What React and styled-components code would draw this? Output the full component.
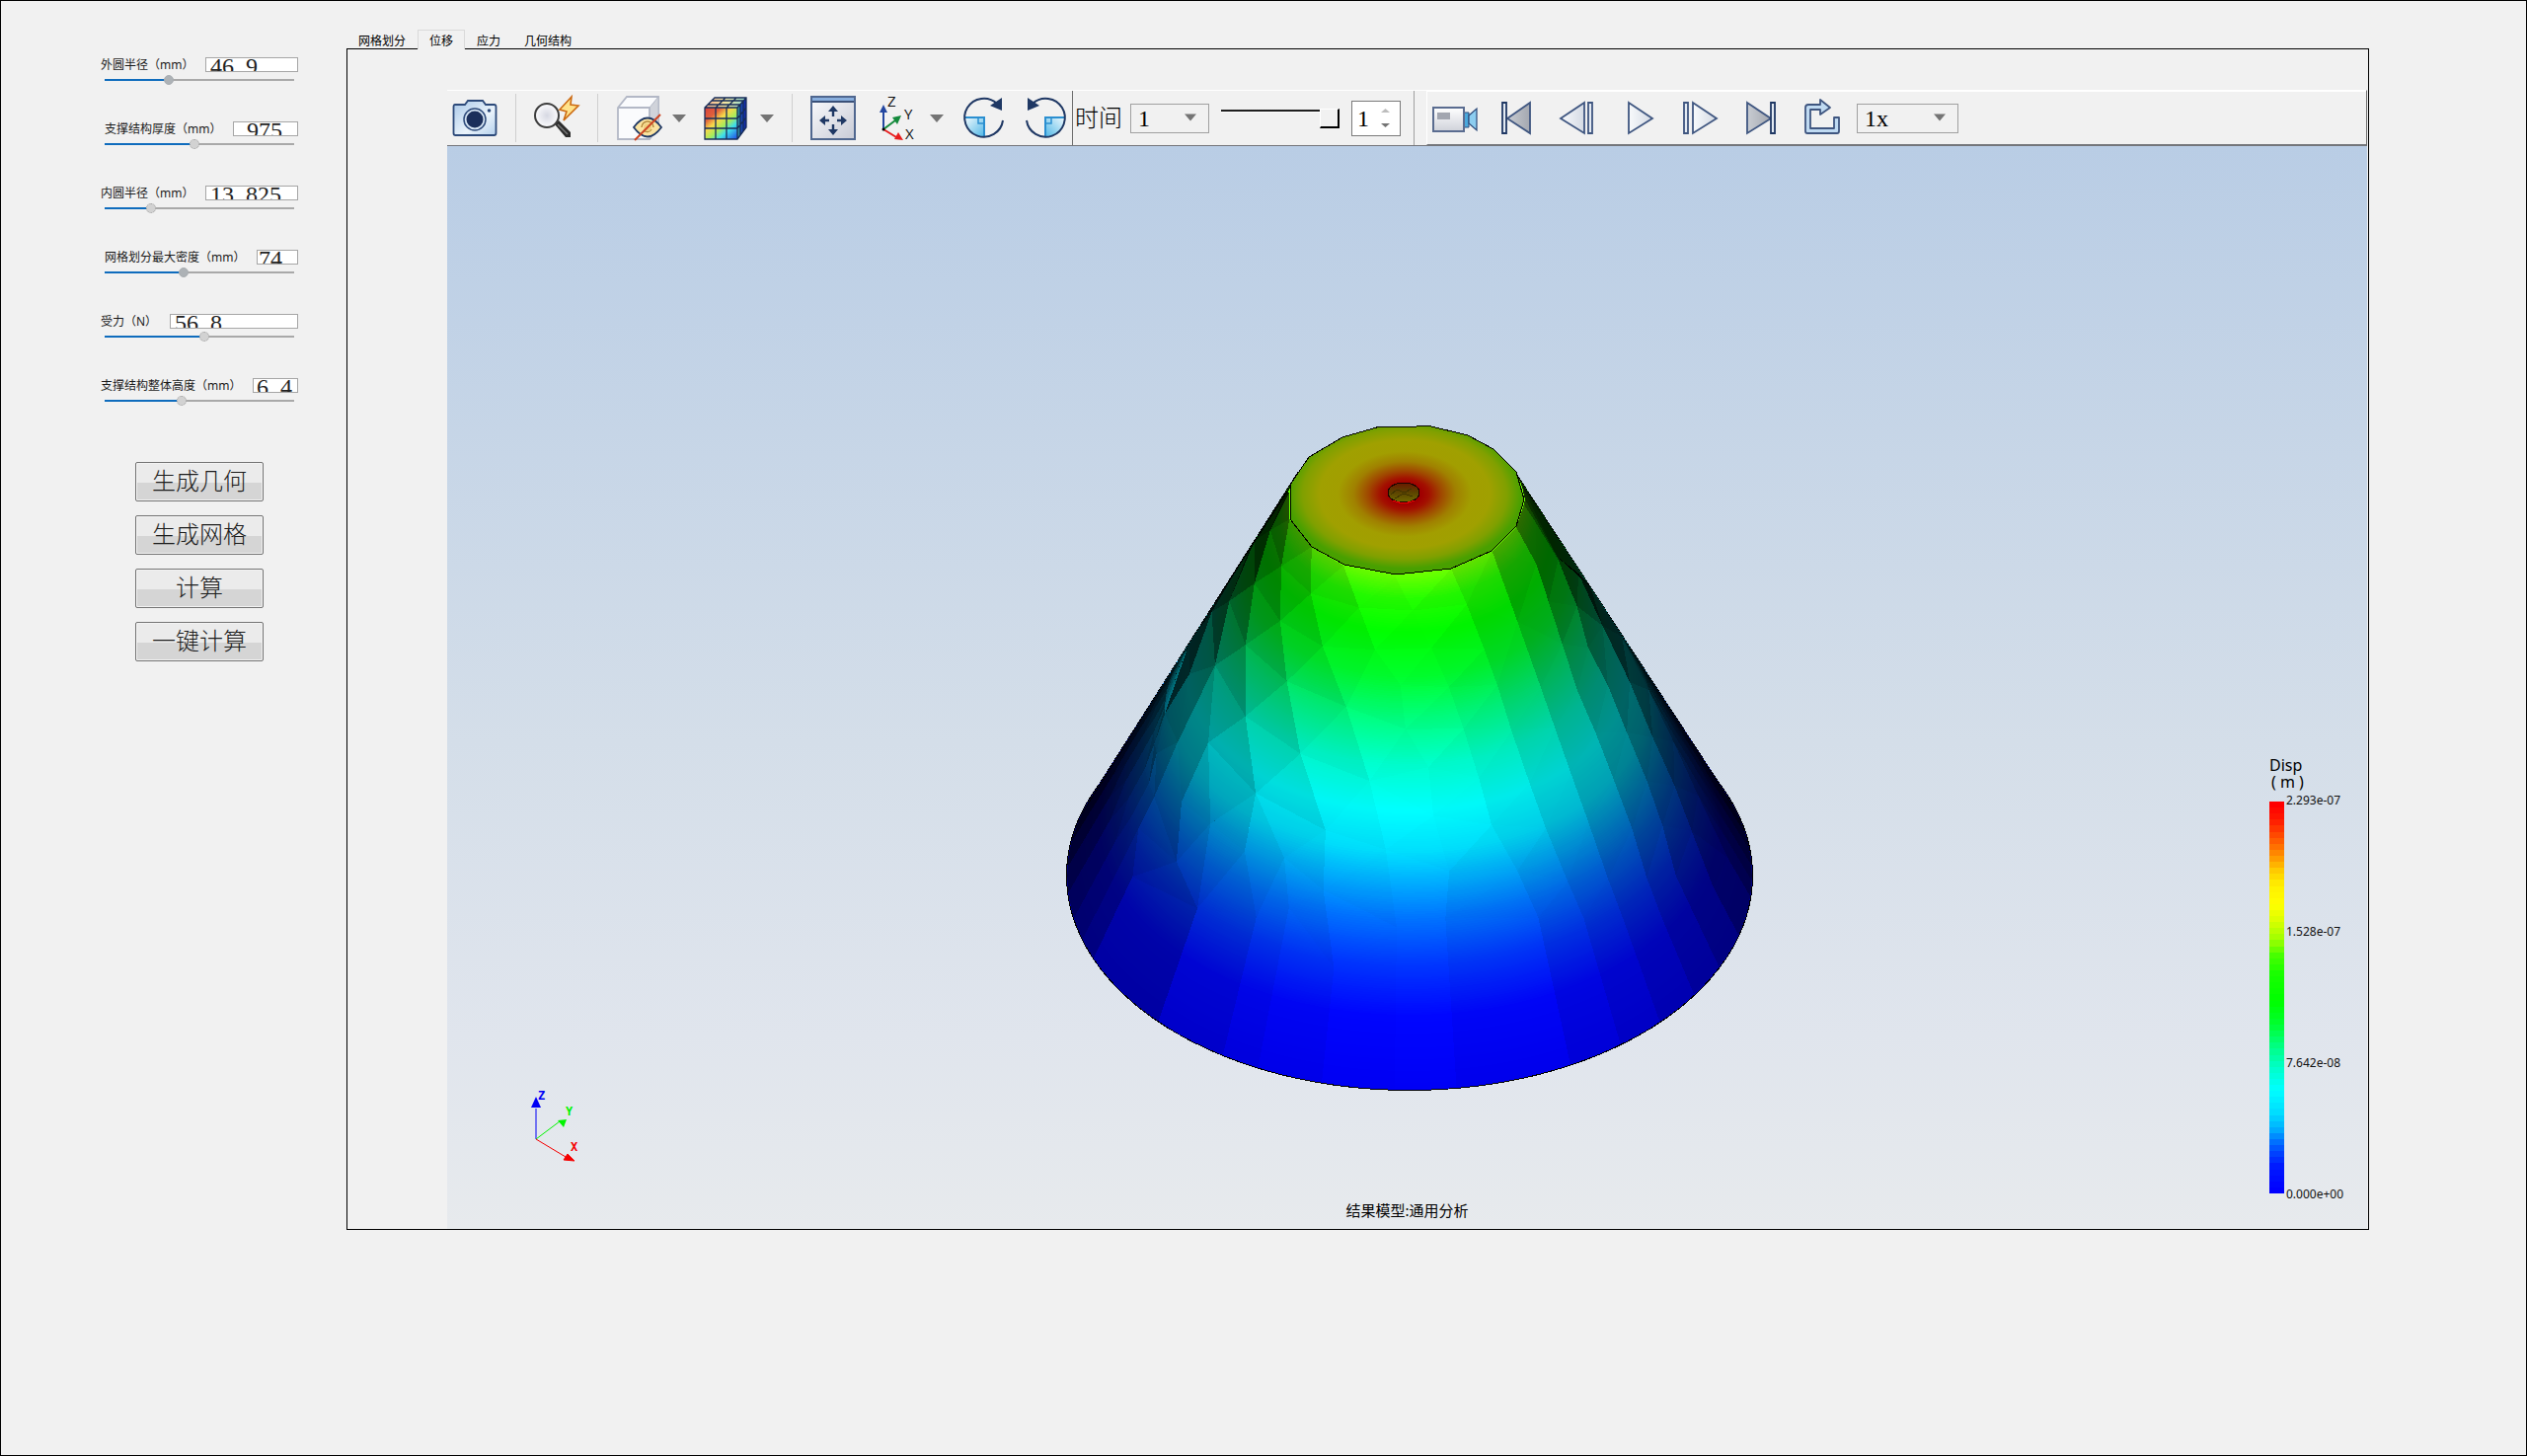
import React, { useState } from 'react';
import styled, { createGlobalStyle } from 'styled-components';

const GlobalStyle = createGlobalStyle`
  *, *::before, *::after {
    box-sizing: border-box;
  }
  body {
    margin: 0;
    background: #f1f1f1;
    color: #000;
    font-family: 'Noto Sans', 'Noto Sans CJK SC', sans-serif;
    font-size: 12px;
  }
  button, input, select {
    margin: 0;
    padding: 0;
    font: inherit;
    color: inherit;
  }
`;

const serif = `'Liberation Serif', 'Noto Sans CJK SC', serif`;

const Page = styled.div`
  display: flex;
  min-height: 100vh;
  border: 1px solid #000;
  background: #f1f1f1;
`;

/* ---------- parameters ---------- */

const Sidebar = styled.aside`
  flex: none;
  width: 350px;
  padding: 57px 49px 0 101px;
`;

const Params = styled.div`
  display: flex;
  flex-direction: column;
  gap: 36px;
`;

const ParamRow = styled.div`
  display: flex;
  justify-content: space-between;
  align-items: center;
  height: 15px;
  padding-left: ${(p) => (p.$indent ? 4 : 0)}px;
`;

const ParamLabel = styled.label`
  line-height: 15px;
  white-space: nowrap;
  color: #1a1a1a;
`;

const ParamInput = styled.input`
  width: ${(p) => p.$width}px;
  height: 15px;
  padding: 4px 0 0 ${(p) => p.$pad}px;
  border: 1px solid #a6a6a6;
  border-radius: 0;
  background: #fff;
  color: #222;
  font-family: ${serif};
  font-size: 24px;
  line-height: 24px;
  outline: none;
`;

const Track = styled.div`
  margin-top: 2px;
  padding: 0 4px;
`;

const Range = styled.input`
  display: block;
  appearance: none;
  width: 100%;
  height: 12px;
  background: linear-gradient(to right, #0f6cbd ${(p) => p.value}%, #a9a9a9 ${(p) => p.value}%) center / 100% 2px no-repeat;

  &::-webkit-slider-thumb {
    appearance: none;
    width: 10px;
    height: 10px;
    border-radius: 50%;
    border: 1px ${(p) => (p.$solid ? 'solid #a9aeb2' : 'dotted #a0a0a0')};
    background: ${(p) => (p.$solid ? '#adb2b6' : '#d2d2d2')};
  }
`;

const Actions = styled.div`
  display: flex;
  flex-direction: column;
  align-items: center;
  gap: 14px;
  margin-top: 56px;
`;

const ActionButton = styled.button`
  width: 130px;
  height: 40px;
  border: 1px solid #747474;
  border-radius: 2px;
  background: linear-gradient(#ebebeb 0, #ebebeb 53%, #d5d5d5 53%, #d5d5d5 100%);
  box-shadow: inset 0 0 0 1px #f3f3f3;
  color: #1c1c1c;
  font-family: ${serif};
  font-size: 24px;
  line-height: 36px;
  font-weight: 300;
`;

/* ---------- workspace ---------- */

const Workspace = styled.main`
  flex: 1;
  display: flex;
  flex-direction: column;
  min-width: 0;
  padding: 29px 159px 228px 0;
`;

const Tabs = styled.div`
  display: flex;
  height: 20px;
  margin-bottom: -1px;
`;

const Tab = styled.button`
  position: relative;
  height: 20px;
  padding: 2px 11px 0;
  border: 1px solid ${(p) => (p.$active ? '#d9d9d9' : 'transparent')};
  border-bottom: 0;
  background: ${(p) => (p.$active ? '#f1f1f1' : 'transparent')};
  font-size: 12px;
  line-height: 17px;
`;

const Panel = styled.section`
  flex: 1;
  display: flex;
  flex-direction: column;
  border: 1px solid #000;
  padding: 41px 1px 0 101px;
`;

const Toolbar = styled.div`
  display: flex;
  height: 57px;
  border-top: 1px solid #fff;
  border-right: 1px solid #6e6e6e;
  border-bottom: 1px solid #74767a;
`;

const ToolGroup = styled.div`
  display: flex;
  align-items: center;
  gap: ${(p) => p.$gap}px;
  padding: 0 ${(p) => p.$end || 0}px 0 ${(p) => p.$start || 0}px;
`;

const TimeGroup = styled(ToolGroup)`
  border-left: 1px solid #6e6e6e;
  border-right: 1px solid #a0a0a0;
`;

const ToolButton = styled.button`
  display: flex;
  align-items: center;
  gap: 11px;
  border: 0;
  background: none;
`;

const Separator = styled.span`
  width: 1px;
  height: 49px;
  background: #cfcfcf;
`;

const TimeLabel = styled.label`
  font-family: ${serif};
  font-size: 24px;
  line-height: 30px;
  font-weight: 300;
`;

const SelectBox = styled.span`
  display: flex;
  align-items: center;
  position: relative;
  width: ${(p) => p.$width}px;
  height: 30px;
  border: 1px solid #a0a0a0;

  svg {
    position: absolute;
    right: 12px;
    top: 9px;
    pointer-events: none;
  }
`;

const Select = styled.select`
  appearance: none;
  width: 100%;
  height: 28px;
  padding: 1px 0 0 7px;
  border: 0;
  background: none;
  font-family: ${serif};
  font-size: 24px;
  line-height: 26px;
`;

const TimeRange = styled.input`
  appearance: none;
  width: 120px;
  height: 20px;
  margin: 0 4px;
  background: linear-gradient(#3a3a3a 0, #000 2px, #fff 2px, #fff 3px, transparent 3px) 0 1px no-repeat;

  &::-webkit-slider-thumb {
    appearance: none;
    width: 20px;
    height: 20px;
    border: 1px solid #fff;
    border-right: 2px solid #000;
    border-bottom: 2px solid #000;
    background: #f1f1f1;
  }
`;

const SpinBox = styled.span`
  display: flex;
  align-items: center;
  width: 50px;
  height: 36px;
  padding-right: 10px;
  border: 1px solid #7a7a7a;
  background: #fff;
`;

const SpinInput = styled.input`
  flex: 1;
  min-width: 0;
  height: 34px;
  padding: 2px 0 0 5px;
  border: 0;
  background: none;
  font-family: ${serif};
  font-size: 24px;
  outline: none;
`;

const PlayerBar = styled(ToolGroup)`
  flex: 1;
  margin-left: 12px;
  border-left: 1px solid #fff;
  border-top: 1px solid #fff;
  border-bottom: 1px solid #74767a;
`;

const Viewport = styled.div`
  flex: 1;
  position: relative;
  min-height: 900px;
  overflow: hidden;
  background: linear-gradient(#b9cde5, #d4dee9 55%, #e0e5ed 82%, #e7eaed);
`;

const Model = styled.svg`
  position: absolute;
  left: calc(50% - 356px);
  top: 271px;
`;

const Triad = styled.svg`
  position: absolute;
  left: 78px;
  bottom: 66px;
  font: bold 12px 'DejaVu Sans Mono', monospace;
`;

const Caption = styled.div`
  position: absolute;
  left: 0;
  right: 0;
  bottom: 9px;
  text-align: center;
  font-size: 15px;
  line-height: 20px;
`;

const Legend = styled.div`
  position: absolute;
  right: 19px;
  bottom: 36px;
  width: 80px;
`;

const LegendTitle = styled.div`
  margin-bottom: 11px;
  font-size: 16px;
  line-height: 17px;

  span {
    display: block;
    padding-left: 2px;
  }
`;

const LegendBody = styled.div`
  display: flex;
  gap: 2px;
`;

const LegendLabels = styled.div`
  display: flex;
  flex-direction: column;
  justify-content: space-between;
  margin: -8px 0;
  line-height: 14px;
  white-space: nowrap;
  color: #111;
`;

/* ---------- colour ramps ---------- */

const mix = (stops, t) => {
  let i = 1;
  while (i < stops.length - 1 && t > stops[i][0]) i++;
  const [t0, a] = stops[i - 1];
  const [t1, b] = stops[i];
  const k = Math.min(1, Math.max(0, (t - t0) / (t1 - t0)));
  return `rgb(${a.map((v, n) => Math.round(v + (b[n] - v) * k)).join(',')})`;
};

const legendStops = [
  [0, [0, 0, 255]],
  [0.06, [0, 24, 255]],
  [0.1, [0, 72, 255]],
  [0.13, [0, 120, 255]],
  [0.16, [0, 176, 255]],
  [0.2, [0, 220, 255]],
  [0.26, [0, 255, 255]],
  [0.32, [0, 255, 200]],
  [0.38, [0, 255, 120]],
  [0.43, [0, 255, 48]],
  [0.49, [0, 255, 0]],
  [0.56, [24, 255, 0]],
  [0.61, [72, 255, 0]],
  [0.65, [160, 255, 0]],
  [0.7, [220, 255, 0]],
  [0.74, [255, 255, 0]],
  [0.79, [255, 240, 0]],
  [0.83, [255, 200, 0]],
  [0.87, [255, 140, 0]],
  [0.91, [255, 88, 0]],
  [0.96, [255, 24, 0]],
  [1, [255, 0, 0]],
];

const coneStops = [
  [0, [0, 0, 245]],
  [0.14, [0, 6, 255]],
  [0.24, [0, 54, 255]],
  [0.33, [0, 115, 255]],
  [0.39, [0, 165, 255]],
  [0.46, [0, 225, 255]],
  [0.54, [0, 255, 255]],
  [0.63, [0, 255, 205]],
  [0.72, [0, 255, 125]],
  [0.8, [0, 255, 45]],
  [0.885, [0, 255, 0]],
  [0.95, [36, 255, 0]],
  [1, [110, 255, 0]],
];

/* ---------- cone geometry ---------- */

const VIEW = [0, 0.777, 0.63];
const EDGE = 1.96;
const BASE = -0.03;

// s runs from 0 at the base to 1 at the top face
const ring = (s) => ({
  cx: 358 - 3 * s,
  cy: 468 - 380 * s,
  rx: 347 - 228 * s,
  ry: 217 - 142 * s,
});

const locate = ([x, y]) => {
  let best = { f: Infinity, s: 0 };
  for (let s = 1; s >= 0; s -= 0.005) {
    const r = ring(s);
    const f = ((x - r.cx) / r.rx) ** 2 + ((y - r.cy) / r.ry) ** 2;
    if (f < best.f) best = { f, s };
    if (f <= 1) break;
  }
  const r = ring(best.s);
  return { s: best.s, a: Math.atan2((x - r.cx) / r.rx, (y - r.cy) / r.ry) };
};

const node = ({ s, a }) => {
  const r = ring(s);
  return {
    flat: [r.cx + r.rx * Math.sin(a), r.cy + r.ry * Math.cos(a)],
    solid: [r.rx * Math.sin(a), r.rx * Math.cos(a), 490 * s],
  };
};

const chains = [
  [[135, 232], [111, 304], [102, 344], [100, 388], [85, 420], [78, 469]],
  [[190, 134], [158, 201], [135, 264], [123, 333], [128, 393], [124, 453], [145, 500]],
  [[232, 78], [201, 129], [176, 190], [161, 255], [155, 333], [157, 415], [193, 442], [203, 510]],
  [[236, 80], [217, 118], [201, 172], [193, 234], [193, 306], [203, 384], [232, 449], [236, 500]],
  [[237, 107], [230, 154], [227, 210], [234, 271], [248, 344], [273, 422], [271, 482], [282, 560]],
  [[259, 135], [260, 181], [271, 235], [295, 295], [318, 370], [334, 441], [345, 520]],
  [[292, 153], [307, 196], [323, 239], [349, 273], [354, 317], [377, 357], [382, 407], [398, 463], [394, 510]],
  [[344, 163], [361, 198], [380, 237], [397, 275], [412, 318], [427, 367], [440, 415], [467, 463], [488, 510]],
  [[400, 157], [415, 192], [432, 237], [445, 273], [460, 320], [478, 373], [496, 420], [517, 473], [533, 510]],
  [[441, 139], [466, 210], [490, 277], [503, 317], [520, 363], [538, 413], [557, 470], [572, 510]],
  [[466, 115], [485, 152], [497, 190], [512, 233], [527, 280], [545, 323], [563, 370], [582, 420], [597, 470], [612, 510]],
  [[472, 92], [485, 110], [508, 148], [527, 195], [538, 237], [558, 275], [578, 323], [597, 372], [613, 417], [627, 468], [647, 510]],
  [[474, 87], [507, 145], [529, 162], [553, 215], [581, 272], [603, 328], [625, 377], [643, 423], [665, 480]],
  [[541, 175], [573, 226], [600, 280], [625, 332], [650, 387], [680, 450]],
];

const finish = (chain) => {
  const placed = chain.map(locate);
  const last = placed[placed.length - 1];
  if (last.s > 0.2) placed.push({ s: last.s / 2, a: last.a });
  return [...placed, { s: BASE, a: last.a }];
};

const inner = chains.map(finish);

// narrow columns between the outermost chain and the silhouette
const fan = (chain, edge, steps) =>
  steps.map((k) => [{ s: 1, a: edge * 0.9 }, ...chain].map(({ s, a }) => ({ s, a: a + (edge - a) * k })));

const columns = [
  ...fan(inner[0], -EDGE, [1, 0.85, 0.7, 0.55, 0.4, 0.25, 0.12, 0]),
  ...inner.slice(1, -1),
  ...fan(inner[inner.length - 1], EDGE, [0, 0.15, 0.3, 0.45, 0.6, 0.8, 1]),
].map((column) => column.map(node));

const sub = (p, q) => p.map((v, i) => v - q[i]);
const length = (v) => Math.hypot(...v);

const brightness = (a, b, c) => {
  const u = sub(b.solid, a.solid);
  const v = sub(c.solid, a.solid);
  const n = [u[1] * v[2] - u[2] * v[1], u[2] * v[0] - u[0] * v[2], u[0] * v[1] - u[1] * v[0]];
  const dot = n.reduce((sum, k, i) => sum + k * VIEW[i], 0);
  return Math.min(1, Math.abs(dot) / (length(n) || 1) / 0.97);
};

// joins neighbouring columns with triangles, always along the shorter diagonal
const facets = [];
for (let c = 0; c < columns.length - 1; c++) {
  const left = columns[c];
  const right = columns[c + 1];
  let i = 0;
  let j = 0;
  while (i < left.length - 1 || j < right.length - 1) {
    const down = i < left.length - 1 ? length(sub(left[i + 1].solid, right[j].solid)) : Infinity;
    const across = j < right.length - 1 ? length(sub(left[i].solid, right[j + 1].solid)) : Infinity;
    const next = down < across ? left[i + 1] : right[j + 1];
    const tri = [left[i], right[j], next];
    facets.push({
      points: tri.map((p) => p.flat.map((v) => v.toFixed(1)).join(',')).join(' '),
      shade: 1 - brightness(...tri),
    });
    if (down < across) i++;
    else j++;
  }
}

const rings = Array.from({ length: 221 }, (_, i) => ({ ...ring(i / 220), fill: mix(coneStops, i / 220) }));

const corners = [[0, -EDGE], [1, -EDGE], [1, EDGE], [0, EDGE]].map(([s, a]) => node({ s, a }).flat);
const body = corners.map((p) => p.map((v) => v.toFixed(1)).join(',')).join(' ');

const topFace =
  '237,72 256,44 290,24 328,13 365,13 376,12 417,22 443,36 466,59 474,87 466,114 441,139 400,157 344,163 292,153 259,135 237,107';

const Cone = () => (
  <Model width="720" height="700" viewBox="0 0 720 700" role="img" aria-label="位移云图">
    <defs>
      <radialGradient id="face" cx=".49" cy=".46" r=".52">
        <stop offset=".14" stopColor="#a00000" />
        <stop offset=".2" stopColor="#a31000" />
        <stop offset=".3" stopColor="#a04800" />
        <stop offset=".42" stopColor="#a08000" />
        <stop offset=".55" stopColor="#a29e00" />
        <stop offset=".7" stopColor="#a0a000" />
        <stop offset=".84" stopColor="#80a000" />
        <stop offset=".96" stopColor="#48a000" />
      </radialGradient>
      <linearGradient id="hole" x1="0" y1="0" x2="0" y2="1">
        <stop offset="0" stopColor="#6a1800" />
        <stop offset=".5" stopColor="#5c4400" />
        <stop offset="1" stopColor="#706a00" />
      </linearGradient>
      <clipPath id="outline">
        <ellipse cx="358" cy="468" rx="347" ry="217" />
        <polygon points={body} />
      </clipPath>
    </defs>
    <g shapeRendering="crispEdges">
      <ellipse cx="358" cy="468" rx="347" ry="217" fill="#0000f5" stroke="#000" strokeWidth="2" />
      <polygon points={body} stroke="#000" />
      {rings.map((r, i) => (
        <ellipse key={i} cx={r.cx} cy={r.cy} rx={r.rx} ry={r.ry} fill={r.fill} />
      ))}
      <g clipPath="url(#outline)">
        {facets.map((f, i) => (
          <polygon key={i} points={f.points} fillOpacity={f.shade} />
        ))}
      </g>
      <polygon points={topFace} fill="url(#face)" stroke="#000" />
      <ellipse cx="352" cy="80" rx="16" ry="10" fill="url(#hole)" stroke="#1a0500" />
      <path d="M339 82l6-5 8 3 7-4M343 86l9-5 9 3" fill="none" stroke="#3f3200" />
      <path d="M341 88q11 5 22 0" fill="none" stroke="#f00000" />
    </g>
  </Model>
);

/* ---------- icons ---------- */

const navy = '#1f3864';

const Icon = ({ children, width = 46, ...rest }) => (
  <svg width={width} height="50" viewBox={`0 0 ${width} 50`} fill="none" overflow="visible" {...rest}>
    {children}
  </svg>
);

const Caret = ({ size = 14 }) => (
  <svg width={size} height="8" viewBox="0 0 14 8">
    <path d="M0 0h14L7 8z" fill="#747474" />
  </svg>
);

const CameraIcon = () => (
  <Icon>
    <defs>
      <linearGradient id="cam" x1="0" y1="0" x2="1" y2="1">
        <stop offset="0" stopColor="#a9c8e8" />
        <stop offset=".6" stopColor="#eaf3fb" />
        <stop offset="1" stopColor="#b4d0ec" />
      </linearGradient>
    </defs>
    <path d="M3 11q-1.500 0-1.500 2v27q0 2 2 2h39q2 0 2-2V13q0-2-2-2H34l-3-4H16l-3 4z" fill="url(#cam)" stroke="#2d4a7a" strokeWidth="1.800" />
    <circle cx="23" cy="26" r="11" fill="#d9e8f6" stroke="#2d4a7a" strokeWidth="1.500" />
    <circle cx="23" cy="26" r="8.500" fill="#1b2f5b" />
    <circle cx="37.500" cy="17" r="1.800" fill="#2d4a7a" />
  </Icon>
);

const ProbeIcon = () => (
  <Icon>
    <defs>
      <radialGradient id="lens">
        <stop offset="0" stopColor="#d6d8e2" />
        <stop offset="1" stopColor="#fbfbfd" />
      </radialGradient>
    </defs>
    <path d="M21 31l4-4 12 12v5h-5z" fill="#2c2c2c" />
    <path d="M24 31l10 10" stroke="#777" strokeWidth="1.500" />
    <circle cx="13" cy="22" r="12" fill="url(#lens)" stroke="#3d3d3d" strokeWidth="2" />
    <path d="M38 3L26 16l7 2-3 9 15-15-8-1z" fill="#ffe28a" stroke="#cc6a12" strokeWidth="1.600" />
  </Icon>
);

const HideIcon = () => (
  <Icon>
    <path d="M2 14L11 3h32v31L34 46H2z" fill="#fafbfd" stroke="#b3b8c6" strokeWidth="1.800" />
    <path d="M34 14l9-11v31l-9 12z" fill="#d0d3da" stroke="#b3b8c6" />
    <path d="M2 14h32v32" stroke="#b3b8c6" strokeWidth="1.800" />
    <path d="M18 34q14-19 28 0-14 19-28 0z" fill="#fbe3a0" stroke={navy} strokeWidth="1.800" />
    <path d="M26 34a6 6 0 0 1 12 0M28 37a5 5 0 0 0 8-1" stroke="#b48a3c" strokeWidth="1.500" />
    <circle cx="32" cy="34" r="4" fill="#efd080" />
    <path d="M19 47l26-26" stroke="#cc4422" strokeWidth="2" />
  </Icon>
);

const ContourIcon = () => (
  <Icon>
    <defs>
      <linearGradient id="cube" x1="0" y1="0" x2=".9" y2="1">
        <stop offset="0" stopColor="#d8423c" />
        <stop offset=".25" stopColor="#e0603c" />
        <stop offset=".42" stopColor="#f8d84a" />
        <stop offset=".6" stopColor="#a8ec5a" />
        <stop offset=".76" stopColor="#3fe0e8" />
        <stop offset="1" stopColor="#2460e8" />
      </linearGradient>
      <linearGradient id="cubeTop">
        <stop offset="0" stopColor="#f4ad8c" />
        <stop offset=".5" stopColor="#f3e6a0" />
        <stop offset="1" stopColor="#8cd8d0" />
      </linearGradient>
      <linearGradient id="cubeSide">
        <stop offset="0" stopColor="#3bb090" />
        <stop offset=".4" stopColor="#1c50b8" />
        <stop offset="1" stopColor="#1020a8" />
      </linearGradient>
    </defs>
    <path d="M1 14L11 4h32L34 14z" fill="url(#cubeTop)" />
    <path d="M1 14h33v32H1z" fill="url(#cube)" />
    <path d="M34 14L43 4v30L34 46z" fill="url(#cubeSide)" />
    <path
      d="M1 14L11 4h32v30L34 46H1zM1 14h33v32M34 14l9-10M12 14v32M23 14v32M1 25h33M1 35h33M12 14L22 4M23 14L33 4M4 11h33M8 7h33M37 11v31M40 7v31M34 25l9-11M34 35l9-11"
      stroke="#172c58"
      strokeWidth="1.300"
    />
  </Icon>
);

const FitIcon = () => (
  <Icon>
    <defs>
      <linearGradient id="fit" x1="0" y1="0" x2="1" y2="1">
        <stop offset="0" stopColor="#fbfbfd" />
        <stop offset="1" stopColor="#c8cbd6" />
      </linearGradient>
    </defs>
    <path d="M1 3h44v43H1z" fill="url(#fit)" stroke="#50678f" strokeWidth="2" />
    <path d="M2 4h42v4H2z" fill="#88aedd" />
    <path d="M2 8h42" stroke="#3a5078" strokeWidth="2" />
    <path d="M23 23v-7M23 31v7M19 27h-7M27 27h7" stroke={navy} strokeWidth="2.400" />
    <path d="M23 12l5 6H18zM23 42l-5-6h10zM9 27l6-5v10zM37 27l-6-5v10z" fill={navy} />
  </Icon>
);

const AxesIcon = () => (
  <Icon style={{ fontFamily: "'Open Sans', sans-serif", fontSize: 15 }}>
    <path d="M10 36V18" stroke="#2447a0" strokeWidth="2" />
    <path d="M10 36l12-9" stroke="#148a3c" strokeWidth="2" />
    <path d="M10 36l13 8" stroke="#e81e1e" strokeWidth="2" />
    <path d="M10 11l4 8H6z" fill="#2447a0" />
    <path d="M28 22l-4 9-5-7z" fill="#148a3c" />
    <path d="M30 47l-9-1 4-7z" fill="#e81e1e" />
    <circle cx="10" cy="36" r="1.500" fill="#000" />
    <text x="14" y="13" fill="#111">Z</text>
    <text x="31" y="26" fill="#111">Y</text>
    <text x="32" y="46" fill="#111">X</text>
  </Icon>
);

const RotateIcon = ({ flip, id }) => (
  <Icon>
    <defs>
      <linearGradient id={id} x1="0" y1="0" x2="1" y2="1">
        <stop offset="0" stopColor="#f2fafe" />
        <stop offset="1" stopColor="#4db6e6" />
      </linearGradient>
    </defs>
    <g transform={flip ? 'matrix(-1 0 0 1 44 0)' : undefined}>
      <path d="M3 24h20v20A20 20 0 0 1 3 24z" fill={`url(#${id})`} />
      <path d="M3 24h20v20" stroke="#2b8fd0" strokeWidth="2" />
      <path d="M17 24v6h6" stroke="#2b8fd0" strokeWidth="1.500" />
      <path d="M42 27A19.500 19.500 0 1 1 36 10" stroke={navy} strokeWidth="2" />
      <path d="M41 4v13L29 12z" fill={navy} />
    </g>
  </Icon>
);

const VideoIcon = () => (
  <Icon>
    <defs>
      <linearGradient id="vid" x1="0" y1="0" x2="0" y2="1">
        <stop offset="0" stopColor="#fff" />
        <stop offset="1" stopColor="#cfd2da" />
      </linearGradient>
    </defs>
    <path d="M31 19h5v15h-5z" fill="#4aa8dc" stroke="#2d4a7a" />
    <path d="M36 22l8-7v22l-8-7z" fill="#8ccdf0" stroke="#2d4a7a" strokeWidth="1.200" />
    <path d="M0 14h31v24H0z" fill="url(#vid)" stroke="#5a6c90" strokeWidth="2" />
    <path d="M4 19h13v7H4z" fill="#a2a6b0" />
  </Icon>
);

const PlayDefs = () => (
  <defs>
    <linearGradient id="pale">
      <stop offset="0" stopColor="#f8fafc" />
      <stop offset="1" stopColor="#d4dae4" />
    </linearGradient>
    <linearGradient id="dark">
      <stop offset="0" stopColor="#c8ccd2" />
      <stop offset="1" stopColor="#a4a8b0" />
    </linearGradient>
  </defs>
);

const PlayIcon = ({ tri, bar, dark, fill = 'pale' }) => (
  <Icon stroke="#3f5680" strokeWidth="1.800">
    <PlayDefs />
    <path d={tri} fill={`url(#${fill})`} />
    {bar && <path d={bar} fill="#e4ebf3" stroke={dark ? navy : '#3f5680'} />}
  </Icon>
);

const LoopIcon = () => (
  <Icon>
    <path
      d="M5 14q0-3 3-3h12V6l10 8-10 7v-5H10v19h24V24h5v14q0 2-2 2H7q-2 0-2-2z"
      fill="#bfdaf2"
      stroke="#3f5680"
      strokeWidth="1.800"
      strokeLinejoin="round"
    />
  </Icon>
);

/* ---------- data ---------- */

const params = [
  { id: 'outer', label: '外圆半径（mm）', text: '46. 9', width: 94, pad: 4, value: 33, solid: true },
  { id: 'thickness', label: '支撑结构厚度（mm）', text: '. 975', width: 66, pad: 1, value: 47, indent: true },
  { id: 'inner', label: '内圆半径（mm）', text: '13. 825', width: 94, pad: 4, value: 23 },
  { id: 'density', label: '网格划分最大密度（mm）', text: '74', width: 42, pad: 1, value: 41, indent: true, solid: true },
  { id: 'force', label: '受力（N）', text: '56. 8', width: 130, pad: 4, value: 53 },
  { id: 'height', label: '支撑结构整体高度（mm）', text: '6. 4', width: 46, pad: 3, value: 40 },
];

const tabs = ['网格划分', '位移', '应力', '几何结构'];
const actions = ['生成几何', '生成网格', '计算', '一键计算'];
const ticks = ['2.293e-07', '1.528e-07', '7.642e-08', '0.000e+00'];

const BANDS = 65;

const Param = ({ id, label, text, width, pad, value, indent, solid }) => {
  const [amount, setAmount] = useState(value);
  return (
    <div>
      <ParamRow $indent={indent}>
        <ParamLabel htmlFor={id}>{label}</ParamLabel>
        <ParamInput id={id} defaultValue={text} $width={width} $pad={pad} />
      </ParamRow>
      <Track>
        <Range
          type="range"
          aria-label={label}
          value={amount}
          onChange={(e) => setAmount(Number(e.target.value))}
          $solid={solid}
        />
      </Track>
    </div>
  );
};

const App = () => {
  const [active, setActive] = useState('位移');

  return (
    <>
      <GlobalStyle />
      <Page>
        <Sidebar>
          <Params>
            {params.map((p) => (
              <Param key={p.id} {...p} />
            ))}
          </Params>
          <Actions>
            {actions.map((name) => (
              <ActionButton key={name}>{name}</ActionButton>
            ))}
          </Actions>
        </Sidebar>

        <Workspace>
          <Tabs role="tablist">
            {tabs.map((name) => (
              <Tab key={name} role="tab" aria-selected={name === active} $active={name === active} onClick={() => setActive(name)}>
                {name}
              </Tab>
            ))}
          </Tabs>
          <Panel>
            <Toolbar>
              <ToolGroup $gap={18} $start={5} $end={2}>
                <ToolButton aria-label="截图"><CameraIcon /></ToolButton>
                <Separator />
                <ToolButton aria-label="查询"><ProbeIcon /></ToolButton>
                <Separator />
                <ToolButton aria-label="隐藏"><HideIcon /><Caret /></ToolButton>
                <ToolButton aria-label="云图"><ContourIcon /><Caret /></ToolButton>
                <Separator />
                <ToolButton aria-label="适应窗口"><FitIcon /></ToolButton>
                <ToolButton aria-label="视角"><AxesIcon /><Caret /></ToolButton>
                <ToolButton aria-label="顺时针旋转"><RotateIcon id="cw" /></ToolButton>
                <ToolButton aria-label="逆时针旋转"><RotateIcon id="ccw" flip /></ToolButton>
              </ToolGroup>
              <TimeGroup $gap={8} $start={2} $end={13}>
                <TimeLabel htmlFor="time">时间</TimeLabel>
                <SelectBox $width={80}>
                  <Select id="time"><option>1</option></Select>
                  <Caret size={12} />
                </SelectBox>
                <TimeRange type="range" aria-label="时间步" defaultValue={100} />
                <SpinBox>
                  <SpinInput aria-label="步数" defaultValue="1" />
                  <svg width="9" height="19" viewBox="0 0 9 19">
                    <path d="M0 4l4.500-4L9 4z" fill="#bdbdbd" />
                    <path d="M0 15h9l-4.500 4z" fill="#747474" />
                  </svg>
                </SpinBox>
              </TimeGroup>
              <PlayerBar $gap={11} $start={6}>
                <ToolGroup $gap={16}>
                  <ToolButton aria-label="录制"><VideoIcon /></ToolButton>
                  <ToolButton aria-label="首帧"><PlayIcon tri="M13 25L36 9v31z" fill="dark" bar="M8 9h4v31H8z" dark /></ToolButton>
                  <ToolButton aria-label="上一帧"><PlayIcon tri="M5 25L29 9v31z" bar="M33 9h4v31h-4z" /></ToolButton>
                  <ToolButton aria-label="播放"><PlayIcon tri="M12 9l24 16-24 15z" /></ToolButton>
                  <ToolButton aria-label="下一帧"><PlayIcon tri="M15 9l24 16-24 15z" bar="M6 9h4v31H6z" /></ToolButton>
                  <ToolButton aria-label="末帧"><PlayIcon tri="M8 9l24 16L8 40z" fill="dark" bar="M32 9h4v31h-4z" dark /></ToolButton>
                  <ToolButton aria-label="循环"><LoopIcon /></ToolButton>
                </ToolGroup>
                <SelectBox $width={103}>
                  <Select aria-label="播放速度"><option>1x</option></Select>
                  <Caret size={12} />
                </SelectBox>
              </PlayerBar>
            </Toolbar>
            <Viewport>
              <Cone />
              <Triad width="60" height="80" viewBox="0 0 60 80">
                <path d="M12 55V24" stroke="#0000f5" />
                <path d="M12 55l24-18" stroke="#00f500" />
                <path d="M12 55l30 18" stroke="#f50000" />
                <path d="M12 12l5 11H7z" fill="#0000f5" />
                <path d="M43 35l-3 8-6-7z" fill="#00f500" />
                <path d="M51 77l-11-1 4-6z" fill="#f50000" stroke="#f50000" />
                <text x="14" y="15" fill="#0000f5">Z</text>
                <text x="42" y="31" fill="#00f500">Y</text>
                <text x="47" y="67" fill="#f50000">X</text>
              </Triad>
              <Caption>结果模型:通用分析</Caption>
              <Legend>
                <LegendTitle>
                  Disp
                  <span>( m )</span>
                </LegendTitle>
                <LegendBody>
                  <svg width="15" height="397" viewBox={`0 0 15 ${BANDS}`} preserveAspectRatio="none" shapeRendering="crispEdges">
                    {Array.from({ length: BANDS }, (_, i) => (
                      <rect key={i} y={i} width="15" height="1" fill={mix(legendStops, 1 - i / (BANDS - 1))} />
                    ))}
                  </svg>
                  <LegendLabels>
                    {ticks.map((t) => (
                      <span key={t}>{t}</span>
                    ))}
                  </LegendLabels>
                </LegendBody>
              </Legend>
            </Viewport>
          </Panel>
        </Workspace>
      </Page>
    </>
  );
};

export default App;
